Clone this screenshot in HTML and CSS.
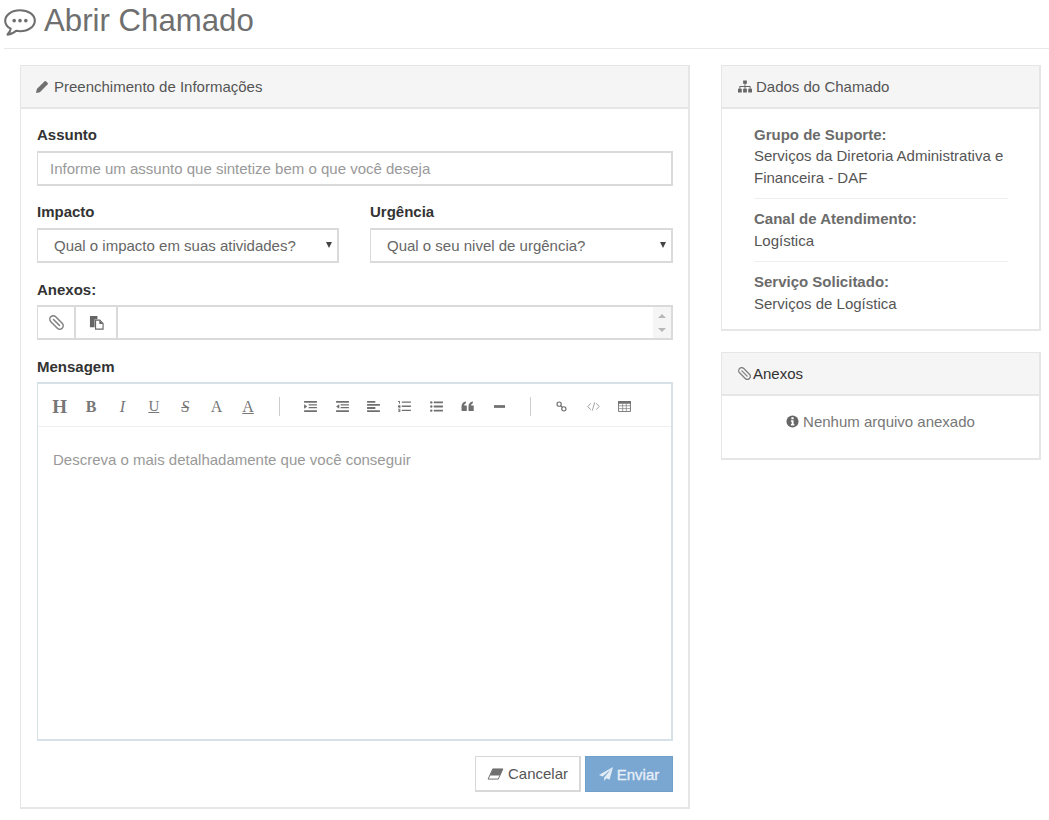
FILE: index.html
```html
<!DOCTYPE html>
<html lang="pt-BR">
<head>
<meta charset="utf-8">
<title>Abrir Chamado</title>
<link rel="stylesheet" href="styles.css">
</head>
<body>
<header class="page-header">
  <svg class="title-icon" viewBox="1 1 30 25.500" aria-hidden="true"><path d="M16 2.200C8.200 2.200 2 6.600 2 12c0 3.100 2 5.800 5.200 7.600-.3 2-1.400 4-3 5.600 3.200-.3 6-1.500 8.200-3.600 1.200.2 2.400.4 3.600.4 7.800 0 14-4.400 14-10S23.800 2.200 16 2.200z" fill="none" stroke="#6f6f6f" stroke-width="2" stroke-linejoin="round"/><circle cx="10.500" cy="12" r="1.700" fill="#6f6f6f"/><circle cx="16" cy="12" r="1.700" fill="#6f6f6f"/><circle cx="21.500" cy="12" r="1.700" fill="#6f6f6f"/></svg>
  <h1 class="page-title">Abrir Chamado</h1>
</header>
<main class="layout">
  <section class="panel">
    <h2 class="panel-head">
      <svg class="ico" viewBox="0 0 14 14" aria-hidden="true"><path d="M0 14l.9-4.200L9.300 1.400a1 1 0 0 1 1.400 0l1.900 1.900a1 1 0 0 1 0 1.400L4.200 13.100z" fill="#707070"/></svg>
      Preenchimento de Informações
    </h2>
    <form class="panel-body form">
      <div class="field">
        <label class="label" for="assunto">Assunto</label>
        <input class="input" id="assunto" type="text" placeholder="Informe um assunto que sintetize bem o que você deseja">
      </div>
      <div class="row">
        <div class="field">
          <label class="label" for="impacto">Impacto</label>
          <div class="select-wrap"><select class="select" id="impacto"><option>Qual o impacto em suas atividades?</option></select></div>
        </div>
        <div class="field">
          <label class="label" for="urgencia">Urgência</label>
          <div class="select-wrap"><select class="select" id="urgencia"><option>Qual o seu nivel de urgência?</option></select></div>
        </div>
      </div>
      <div class="field">
        <div class="label label-low">Anexos:</div>
        <div class="attach">
          <span class="attach-btn">
            <svg class="ico-md" viewBox="0 0 14 14" aria-hidden="true"><g transform="rotate(-45 7 7)" fill="none" stroke="#808080" stroke-width="1.400" stroke-linecap="round"><rect x="3.800" y="-.5" width="6.400" height="15" rx="3.200"/><path d="M7 3v8"/></g></svg>
          </span>
          <span class="attach-btn attach-btn-wide">
            <svg class="ico-md" viewBox="0 0 16 16" aria-hidden="true"><path d="M1 1h8v3.500H6V13H1z" fill="#666"/><path d="M7 5.500h4.500L15 9v6H7z" fill="#fff" stroke="#666" stroke-width="1.200"/><path d="M11 5.500V9.500H15z" fill="#666"/></svg>
          </span>
          <div class="attach-input"></div>
          <div class="scrollbar"><i class="arrow-up"></i><i class="arrow-down"></i></div>
        </div>
      </div>
      <div class="field">
        <div class="label label-low">Mensagem</div>
        <div class="editor">
          <div class="toolbar">
            <span class="tb tb-h">H</span>
            <span class="tb tb-b">B</span>
            <span class="tb tb-i">I</span>
            <span class="tb tb-u">U</span>
            <span class="tb tb-s">S</span>
            <span class="tb tb-a">A</span>
            <span class="tb tb-a tb-u">A</span>
            <span class="tb-sep"></span>
            <span class="tb"><svg class="tb-ico" viewBox="0 0 14 12" aria-hidden="true"><path d="M0 0h14v2H0zM5 3.500h9v1.500H5zM5 6.500h9V8H5zM0 10h14v2H0zM3.500 6L0 3.500v5z" fill="#707070"/></svg></span>
            <span class="tb"><svg class="tb-ico" viewBox="0 0 14 12" aria-hidden="true"><path d="M0 0h14v2H0zM5 3.500h9v1.500H5zM5 6.500h9V8H5zM0 10h14v2H0zM0 6l3.500-2.500v5z" fill="#707070"/></svg></span>
            <span class="tb"><svg class="tb-ico" viewBox="0 0 14 12" aria-hidden="true"><path d="M0 0h9v2H0zM0 3.300h14v2H0zM0 6.600h9v2H0zM0 10h14v2H0z" fill="#707070"/></svg></span>
            <span class="tb"><svg class="tb-ico" viewBox="0 0 14 12" aria-hidden="true"><path d="M4 .5h10V2H4zM4 5h10v1.500H4zM4 9.500h10V11H4zM0 0h2v3H1V1H0zM0 4.500h2.500v3.500H0V7h1.500V6.500H0zM0 9h2.500v3H0v-.8h1.500v-.4H.5V10h1v-.3H0z" fill="#707070"/></svg></span>
            <span class="tb"><svg class="tb-ico" viewBox="0 0 14 12" aria-hidden="true"><path d="M4 .5h10V2.500H4zM4 5h10v2H4zM4 9.500h10v2H4z" fill="#707070"/><circle cx="1.300" cy="1.500" r="1.300" fill="#707070"/><circle cx="1.300" cy="6" r="1.300" fill="#707070"/><circle cx="1.300" cy="10.500" r="1.300" fill="#707070"/></svg></span>
            <span class="tb"><svg class="tb-ico" viewBox="0 0 14 12" aria-hidden="true"><path d="M0 11V6C0 3 1.500 1 5 .5v2C3.500 3 3 4 3 5h3v6zM8 11V6c0-3 1.500-5 5-5.500v2C11.500 3 11 4 11 5h3v6z" fill="#707070" transform="translate(.5 0) scale(.95 1)"/></svg></span>
            <span class="tb"><svg class="tb-ico" viewBox="0 0 14 12" aria-hidden="true"><path d="M1 4.500h12v3H1z" fill="#707070"/></svg></span>
            <span class="tb-sep"></span>
            <span class="tb"><svg class="tb-ico" viewBox="0 0 14 14" aria-hidden="true"><circle cx="4" cy="4" r="2.700" fill="none" stroke="#707070" stroke-width="1.500"/><circle cx="10" cy="10" r="2.700" fill="none" stroke="#707070" stroke-width="1.500"/><path d="M5.500 5.500l3 3" stroke="#707070" stroke-width="1.500"/></svg></span>
            <span class="tb"><svg class="tb-ico" viewBox="0 0 14 12" aria-hidden="true"><path d="M4 2.500L.8 6 4 9.500M10 2.500L13.200 6 10 9.500M8.300 1.500L5.700 10.500" fill="none" stroke="#999" stroke-width="1"/></svg></span>
            <span class="tb"><svg class="tb-ico" viewBox="0 0 14 12" aria-hidden="true"><path d="M.5.500h13v11H.5z" fill="none" stroke="#707070"/><path d="M0 0h14v3H0z" fill="#707070"/><path d="M.5 5.200h13M.5 8.300h13M5 3v8.500M9 3v8.500" stroke="#808080" stroke-width=".8"/></svg></span>
          </div>
          <div class="editor-body">Descreva o mais detalhadamente que você conseguir</div>
        </div>
      </div>
      <div class="actions">
        <button class="btn btn-default" type="button">
          <svg class="ico-btn" viewBox="0 0 18 13" aria-hidden="true"><path d="M6 1H17l-5 11H1z" fill="#fff" stroke="#666" stroke-width="1" stroke-linejoin="round"/><path d="M6 1H17l-3.200 7H3z" fill="#707070"/></svg>
          Cancelar
        </button>
        <button class="btn btn-primary" type="button">
          <svg class="ico-plane" viewBox="0 0 15 15" aria-hidden="true"><path d="M15 0L0 8.700l3.800 1.600L13 2.500 5.500 11.200V15l2.400-2.900 3.400 1.500z" fill="#e3edf6"/></svg>
          Enviar
        </button>
      </div>
    </form>
  </section>
  <aside class="side">
    <section class="panel">
      <h2 class="panel-head">
        <svg class="ico ico-map" viewBox="0 0 15 13" aria-hidden="true"><path d="M5.500 0h4v3.500h-4zM0 9h4v4H0zM5.500 9h4v4h-4zM11 9h4v4h-4zM7 3.500h1V6h5.500v3h-1V7H8v2H7V7H2.500v2h-1V6H7z" fill="#666"/></svg>
        Dados do Chamado
      </h2>
      <div class="panel-body info">
        <div class="info-item"><strong class="info-key">Grupo de Suporte:</strong><span>Serviços da Diretoria Administrativa e Financeira - DAF</span></div>
        <div class="info-item"><strong class="info-key">Canal de Atendimento:</strong><span>Logística</span></div>
        <div class="info-item"><strong class="info-key">Serviço Solicitado:</strong><span>Serviços de Logística</span></div>
      </div>
    </section>
    <section class="panel">
      <h2 class="panel-head panel-head-dark">
        <svg class="ico ico-clip" viewBox="0 0 14 14" aria-hidden="true"><g transform="rotate(-45 7 7)" fill="none" stroke="#808080" stroke-width="1.400" stroke-linecap="round"><rect x="3.800" y="-.5" width="6.400" height="15" rx="3.200"/><path d="M7 3v8"/></g></svg>Anexos
      </h2>
      <div class="panel-body empty">
        <svg class="ico" viewBox="0 0 14 14" aria-hidden="true"><circle cx="7" cy="7" r="6.500" fill="#666"/><path d="M5.800 2.500h2.400v2H5.800zM5.300 5.700h2.900v4h.8v1.600H5.300V9.700h.8V7.300h-.8z" fill="#fff"/></svg>
        Nenhum arquivo anexado
      </div>
    </section>
  </aside>
</main>
</body>
</html>
```

FILE: styles.css
```css
* { box-sizing: border-box; }
html, body { margin: 0; padding: 0; }
body {
  font-family: "Liberation Sans", Arial, sans-serif;
  font-size: 15px;
  line-height: 21px;
  color: #555;
  background: #fff;
  height: 820px;
  overflow: hidden;
}
.page-header {
  display: flex;
  align-items: center;
  gap: 8px;
  height: 49px;
  margin-left: 4px;
  padding-bottom: 7px;
  border-bottom: 1px solid #e8e8e8;
}
.title-icon { width: 32px; height: 27px; margin-top: 4px; }
.page-title {
  margin: 0;
  font-size: 31.200px;
  line-height: 40px;
  font-weight: 400;
  color: #6f6f6f;
}
.layout {
  display: grid;
  grid-template-columns: 670px 320px;
  gap: 31px;
  padding: 16px 0 0 20px;
  align-items: start;
}
.side { display: flex; flex-direction: column; gap: 21px; }
.panel { border: 2px solid #e6e6e6; border-width: 1px 2px 2px 1px; background: #fff; }
.panel-head {
  display: flex;
  align-items: center;
  gap: 5px;
  height: 43px;
  margin: 0;
  padding: 0 15px;
  font-size: 15px;
  font-weight: 400;
  color: #555;
  background: #f5f5f5;
  border-bottom: 2px solid #e6e6e6;
}
.panel-head-dark { color: #333; }
.ico { width: 13px; height: 13px; flex: none; }
.ico-map { width: 14px; margin-left: 1px; margin-right: -1px; }
.ico-clip { margin-left: 1px; margin-right: -3px; }
.panel-body { padding: 15px; }
.form { display: flex; flex-direction: column; gap: 15px; padding: 15px 15px 15px 16px; }
.field { display: flex; flex-direction: column; min-width: 0; }
.label {
  display: block;
  font-weight: 700;
  color: #333;
  line-height: 21px;
  margin-bottom: 6px;
  height: 21px;
}
.label-low { height: 22px; padding-top: 1px; margin-bottom: 5px; }
.input, .select {
  width: 100%;
  height: 35px;
  font: inherit;
  color: #666;
  background: #fff;
  border: 1px solid #dadada;
  border-width: 2px 2px 2px 1px;
  border-radius: 0;
  outline: 0;
}
.input { padding: 0 12px; }
.input::placeholder { color: #999; opacity: 1; }
.row { display: grid; grid-template-columns: 302px 303px; gap: 31px; }
.select-wrap { position: relative; }
.select-wrap::after {
  content: "";
  position: absolute;
  right: 7px;
  top: 14px;
  border-left: 3.500px solid transparent;
  border-right: 3.500px solid transparent;
  border-top: 6px solid #444;
}
.select { appearance: none; -webkit-appearance: none; padding: 0 24px 0 16px; }
.attach {
  display: flex;
  height: 35px;
  border: 1px solid #dadada;
  border-width: 2px 2px 2px 1px;
}
.attach-btn {
  display: flex;
  align-items: center;
  justify-content: center;
  width: 38px;
  border-right: 2px solid #dadada;
  flex: none;
}
.attach-btn-wide { width: 42px; }
.ico-md { width: 15px; height: 15px; }
.attach-input { flex: 1; }
.scrollbar {
  width: 18px;
  background: #f5f5f5;
  display: flex;
  flex-direction: column;
  align-items: center;
  justify-content: center;
  gap: 10px;
}
.arrow-up, .arrow-down { width: 0; height: 0; border-left: 4px solid transparent; border-right: 4px solid transparent; }
.arrow-up { border-bottom: 4px solid #b8b8b8; }
.arrow-down { border-top: 4px solid #b8b8b8; }
.editor {
  height: 359px;
  border: 2px solid #d6e2e8;
  border-left-width: 1px;
  display: flex;
  flex-direction: column;
}
.toolbar {
  display: flex;
  align-items: center;
  height: 43px;
  padding: 3px 0 0 6px;
  border-bottom: 1px solid #eef0f1;
  flex: none;
}
.tb, .tb-sep {
  width: 31.400px;
  flex: none;
  display: flex;
  align-items: center;
  justify-content: center;
  height: 20px;
  font-family: "Liberation Serif", "Times New Roman", serif;
  font-size: 15px;
  color: #777;
}
.tb-sep::before { content: ""; width: 1px; height: 19px; background: #ccc; }
.tb-h { font-size: 19px; font-weight: 700; }
.tb-b { font-size: 16px; font-weight: 700; }
.tb-i { font-size: 16px; font-style: italic; }
.tb-u { text-decoration: underline; }
.tb-s { text-decoration: line-through; font-size: 16px; font-style: italic; }
.tb-a { font-size: 16px; }
.tb-ico { width: 13px; height: 11px; }
.editor-body { flex: 1; padding: 22px 15px; color: #999; }
.actions { display: flex; justify-content: flex-end; gap: 4px; }
.btn {
  display: flex;
  align-items: center;
  justify-content: center;
  height: 36px;
  font: inherit;
  border-radius: 0;
  padding: 0;
}
.btn-default { width: 106px; gap: 4px; color: #555; background: #fff; border: 1px solid #d8d8d8; border-width: 1px 2px 2px 1px; }
.btn-primary { width: 88px; gap: 4px; color: #e8f0f8; background: #7aa7d2; border: 1px solid #6f9fcb; -webkit-text-stroke: .3px #e8f0f8; }
.ico-btn { width: 17px; height: 12px; }
.ico-plane { width: 14px; height: 14px; }
.info { padding: 15px 31px 5px 32px; line-height: 21.400px; }
.info-item { padding-bottom: 10px; margin-bottom: 9.200px; border-bottom: 1px solid #eee; }
.info-item:last-child { border-bottom: 0; margin-bottom: 0; }
.info-key { display: block; color: #6b6b6b; }
.empty { display: flex; align-items: center; justify-content: center; gap: 4px; padding: 15px 15px 26px; color: #777; }
```
